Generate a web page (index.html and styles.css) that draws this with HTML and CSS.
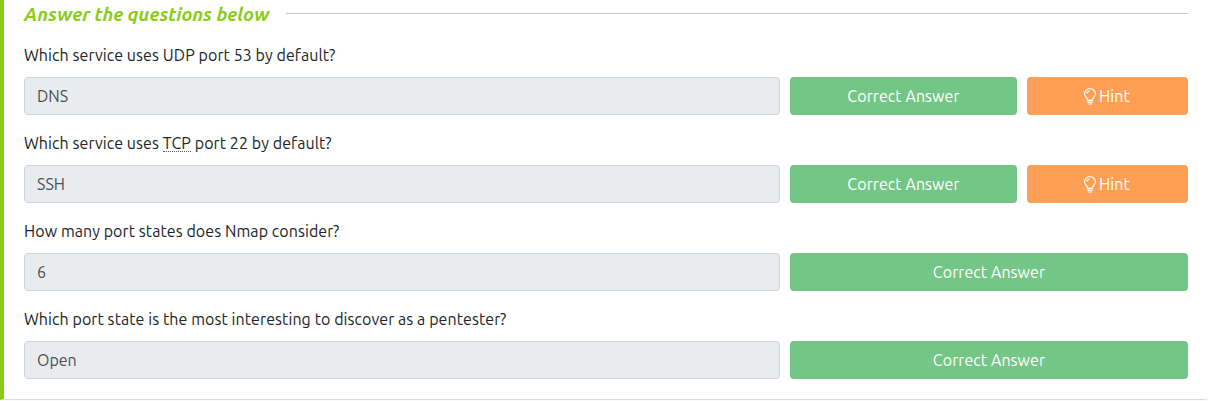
FILE: index.html
```html
<!DOCTYPE html>
<html lang="en">
<head>
<meta charset="utf-8">
<title>Questions</title>
<link rel="stylesheet" href="styles.css">
</head>
<body>
<main class="card">
  <header class="heading"><h2>Answer the questions below</h2><span class="rule"></span></header>
  <section class="question">
    <p>Which service uses UDP port 53 by default?</p>
    <div class="row"><div class="answer">DNS</div><div class="btn correct">Correct Answer</div><div class="btn hint"><svg class="bulb" viewBox="0 0 12 17"><path d="M3.700 12C3.700 9.800.6 9 .6 5.700a5.400 5.100 0 0 1 10.800 0C11.400 9 8.300 9.800 8.300 12M3.200 12.300h5.600M3.200 14.200h5.600M4.200 16h3.600M3 5.500A2.800 2.500 0 0 1 5.800 3"/></svg><span>Hint</span></div></div>
  </section>
  <section class="question">
    <p>Which service uses <abbr>TCP</abbr> port 22 by default?</p>
    <div class="row"><div class="answer">SSH</div><div class="btn correct">Correct Answer</div><div class="btn hint"><svg class="bulb" viewBox="0 0 12 17"><path d="M3.700 12C3.700 9.800.6 9 .6 5.700a5.400 5.100 0 0 1 10.800 0C11.400 9 8.300 9.800 8.300 12M3.200 12.300h5.600M3.200 14.200h5.600M4.200 16h3.600M3 5.500A2.800 2.500 0 0 1 5.800 3"/></svg><span>Hint</span></div></div>
  </section>
  <section class="question">
    <p>How many port states does Nmap consider?</p>
    <div class="row"><div class="answer">6</div><div class="btn correct wide">Correct Answer</div></div>
  </section>
  <section class="question">
    <p>Which port state is the most interesting to discover as a pentester?</p>
    <div class="row"><div class="answer">Open</div><div class="btn correct wide">Correct Answer</div></div>
  </section>
</main>
</body>
</html>
```
FILE: styles.css
```css
* { box-sizing: border-box; }
body { margin: 0; background: #fbfbfb; color: #212529; font: 16px/24px Ubuntu, "Noto Sans", sans-serif; letter-spacing: 0.075px; overflow: hidden; }
.card { height: 400px; padding: 0 20px; border-left: 4px solid #88cc14; border-bottom: 1px solid #dcdcdc; background: #fff; border-bottom-right-radius: 3px; }
.heading { display: flex; height: 43px; gap: 16px; }
h2 { margin: 2px 0 0; color: #88cc14; font-size: 18.8px; line-height: 25px; font-style: italic; font-weight: 700; letter-spacing: 0; white-space: nowrap; width: 246px; }
.rule { flex: 1; height: 1px; background: #c8c8c8; margin-top: 13px; }
.question { height: 88px; }
p { margin: 0; height: 34px; white-space: nowrap; }
.row { display: flex; gap: 10px; }
.answer { width: 756px; height: 38px; padding: 6px 12px; border: 1px solid #ced4da; border-radius: 4px; background: #e9ecef; color: #495057; letter-spacing: 0; }
.btn { height: 38px; border-radius: 4px; color: #fff; display: flex; align-items: center; justify-content: center; }
.correct { width: 227px; background: #74c686; }
.wide { width: 398px; }
.hint { width: 161px; background: #fda056; gap: 3px; }
.bulb { width: 12px; height: 17px; margin-left: -1px; fill: none; stroke: #fff; stroke-width: 1.2; }
abbr { display: inline-block; line-height: 16px; border-bottom: 1px dotted #555; }
```
